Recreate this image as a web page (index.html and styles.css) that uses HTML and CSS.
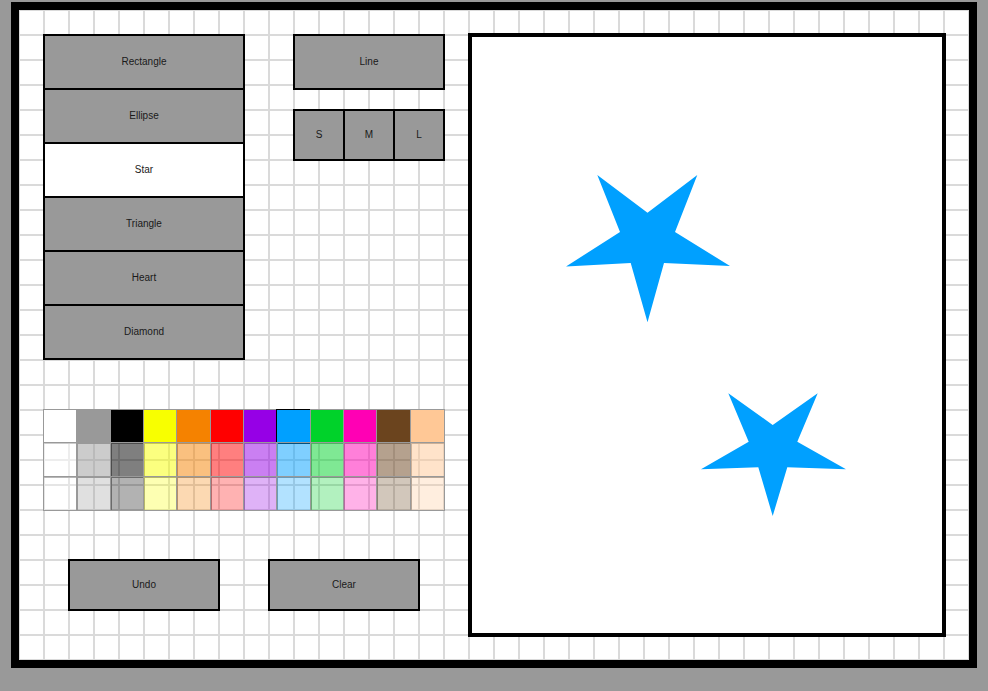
FILE: index.html
```html
<!DOCTYPE html>
<html>
<head>
<meta charset="utf-8">
<link rel="stylesheet" href="styles.css">
</head>
<body>
<div class="frame">
  <div class="left">
    <div class="top-row">
      <div class="shapes">
        <div class="btn shape">Rectangle</div>
        <div class="btn shape">Ellipse</div>
        <div class="btn shape selected">Star</div>
        <div class="btn shape">Triangle</div>
        <div class="btn shape">Heart</div>
        <div class="btn shape">Diamond</div>
      </div>
      <div class="tools">
        <div class="btn line">Line</div>
        <div class="sizes">
          <div class="btn size">S</div>
          <div class="btn size">M</div>
          <div class="btn size">L</div>
        </div>
      </div>
    </div>
    <div class="palette">
      <div class="sw" style="background:#ffffff"></div>
      <div class="sw" style="background:#999999"></div>
      <div class="sw" style="background:#000000"></div>
      <div class="sw" style="background:#f8ff00"></div>
      <div class="sw" style="background:#f58200"></div>
      <div class="sw" style="background:#ff0000"></div>
      <div class="sw" style="background:#9600e6"></div>
      <div class="sw sel" style="background:#00a0ff"></div>
      <div class="sw" style="background:#00d22a"></div>
      <div class="sw" style="background:#ff00b4"></div>
      <div class="sw" style="background:#6b441e"></div>
      <div class="sw" style="background:#ffc896"></div>

      <div class="sw" style="background:rgba(255,255,255,0.5)"></div>
      <div class="sw" style="background:rgba(153,153,153,0.5)"></div>
      <div class="sw" style="background:rgba(0,0,0,0.5)"></div>
      <div class="sw" style="background:rgba(248,255,0,0.5)"></div>
      <div class="sw" style="background:rgba(245,130,0,0.5)"></div>
      <div class="sw" style="background:rgba(255,0,0,0.5)"></div>
      <div class="sw" style="background:rgba(150,0,230,0.5)"></div>
      <div class="sw" style="background:rgba(0,160,255,0.5)"></div>
      <div class="sw" style="background:rgba(0,210,42,0.5)"></div>
      <div class="sw" style="background:rgba(255,0,180,0.5)"></div>
      <div class="sw" style="background:rgba(107,68,30,0.5)"></div>
      <div class="sw" style="background:rgba(255,200,150,0.5)"></div>

      <div class="sw" style="background:rgba(255,255,255,0.3)"></div>
      <div class="sw" style="background:rgba(153,153,153,0.3)"></div>
      <div class="sw" style="background:rgba(0,0,0,0.3)"></div>
      <div class="sw" style="background:rgba(248,255,0,0.3)"></div>
      <div class="sw" style="background:rgba(245,130,0,0.3)"></div>
      <div class="sw" style="background:rgba(255,0,0,0.3)"></div>
      <div class="sw" style="background:rgba(150,0,230,0.3)"></div>
      <div class="sw" style="background:rgba(0,160,255,0.3)"></div>
      <div class="sw" style="background:rgba(0,210,42,0.3)"></div>
      <div class="sw" style="background:rgba(255,0,180,0.3)"></div>
      <div class="sw" style="background:rgba(107,68,30,0.3)"></div>
      <div class="sw" style="background:rgba(255,200,150,0.3)"></div>
    </div>
    <div class="actions">
      <div class="btn action">Undo</div>
      <div class="btn action">Clear</div>
    </div>
  </div>
  <div class="canvas">
    <svg class="drawing" viewBox="472 37 470 596" width="470" height="596">
      <polygon fill="#00a0ff" points="647.5,322.3 630.7,263 566,266.5 620,232 597.3,175 647.5,212.7 697.3,175 675,232 730,266 664,263"/>
      <polygon fill="#00a0ff" points="772.7,516 758.3,467.3 701,469.3 748.7,441.7 728.3,393.3 772.7,425 817.7,393.3 797.3,441.7 846,469.3 787.3,467.3"/>
    </svg>
  </div>
</div>
</body>
</html>
```

FILE: styles.css
```css
html, body {
  margin: 0;
  padding: 0;
}
body {
  background: #999999;
  width: 988px;
  height: 691px;
  overflow: hidden;
  font-family: "Liberation Sans", Arial, sans-serif;
}
.frame {
  box-sizing: border-box;
  margin: 2px 0 0 11px;
  width: 966px;
  height: 666px;
  border: 8px solid #000;
  background-color: #ffffff;
  background-image:
    linear-gradient(to right, #dadada 0, #dadada 2px, transparent 2px),
    linear-gradient(to bottom, #dadada 0, #dadada 2px, transparent 2px);
  background-size: 25px 25px;
  background-position: 24px 24px;
  display: flex;
  align-items: flex-start;
  padding: 23px 0 0 24px;
  gap: 23px;
}
.left {
  width: 402px;
  margin-top: 1px;
  display: flex;
  flex-direction: column;
}
.top-row {
  display: flex;
  align-items: flex-start;
  gap: 48px;
}
.btn {
  box-sizing: border-box;
  border: 2px solid #000;
  background: #999999;
  color: #1a1a1a;
  font-size: 10px;
  padding-bottom: 2px;
  display: flex;
  align-items: center;
  justify-content: center;
}
.shapes {
  display: flex;
  flex-direction: column;
  width: 202px;
}
.shape {
  height: 56px;
}
.shape + .shape {
  margin-top: -2px;
}
.shape.selected {
  background: #ffffff;
}
.tools {
  display: flex;
  flex-direction: column;
  width: 152px;
}
.line {
  height: 56px;
}
.sizes {
  display: flex;
  margin-top: 19px;
}
.size {
  width: 52px;
  height: 52px;
}
.size + .size {
  margin-left: -2px;
}
.palette {
  margin: 50px 0 0 1px;
  width: 400px;
  height: 100px;
  display: grid;
  grid-template-columns: repeat(12, 1fr);
  grid-template-rows: repeat(3, 1fr);
}
.sw {
  outline: 1.5px solid #999999;
  outline-offset: -0.75px;
}
.sw.sel {
  outline-color: #000;
}
.actions {
  display: flex;
  gap: 48px;
  margin: 49px 0 0 25px;
}
.action {
  width: 152px;
  height: 52px;
}
.canvas {
  box-sizing: border-box;
  width: 478px;
  height: 604px;
  border: 4px solid #000;
  background: #ffffff;
}
.drawing {
  display: block;
}
```
